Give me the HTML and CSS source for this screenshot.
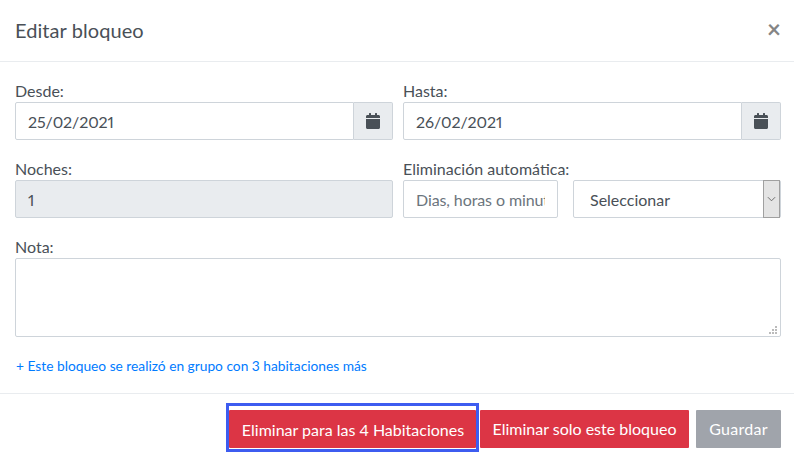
FILE: index.html
```html
<!DOCTYPE html>
<html lang="es">
<head>
<meta charset="utf-8">
<title>Editar bloqueo</title>
<link rel="stylesheet" href="styles.css">
</head>
<body>
<div class="modal">
  <header class="head">
    <h1 class="title">Editar bloqueo</h1>
    <span class="close">×</span>
  </header>
  <main class="body">
    <div class="row">
      <div class="field">
        <label class="label">Desde:</label>
        <div class="group">
          <input class="input joined" type="text" value="25/02/2021">
          <span class="addon"><svg class="cal" viewBox="0 0 448 512"><path d="M0 464c0 26.500 21.500 48 48 48h352c26.500 0 48-21.500 48-48V192H0v272zM400 64h-48V16c0-8.800-7.200-16-16-16h-32c-8.800 0-16 7.200-16 16v48H160V16c0-8.800-7.200-16-16-16h-32c-8.800 0-16 7.200-16 16v48H48C21.500 64 0 85.500 0 112v48h448v-48c0-26.500-21.500-48-48-48z"/></svg></span>
        </div>
      </div>
      <div class="field">
        <label class="label">Hasta:</label>
        <div class="group">
          <input class="input joined" type="text" value="26/02/2021">
          <span class="addon"><svg class="cal" viewBox="0 0 448 512"><path d="M0 464c0 26.500 21.500 48 48 48h352c26.500 0 48-21.500 48-48V192H0v272zM400 64h-48V16c0-8.800-7.200-16-16-16h-32c-8.800 0-16 7.200-16 16v48H160V16c0-8.800-7.200-16-16-16h-32c-8.800 0-16 7.200-16 16v48H48C21.500 64 0 85.500 0 112v48h448v-48c0-26.500-21.500-48-48-48z"/></svg></span>
        </div>
      </div>
    </div>
    <div class="row">
      <div class="field">
        <label class="label">Noches:</label>
        <input class="input" type="text" value="1" disabled>
      </div>
      <div class="field">
        <label class="label">Eliminación automática:</label>
        <div class="auto">
          <input class="input short" type="text" placeholder="Dias, horas o minutos">
          <div class="select">
            <span class="select-text">Seleccionar</span>
            <span class="spin"><svg class="chev" viewBox="0 0 10 6"><path d="M1 1l4 4 4-4"/></svg></span>
          </div>
        </div>
      </div>
    </div>
    <div class="note">
      <label class="label">Nota:</label>
      <div class="area-wrap">
        <textarea class="area"></textarea>
        <svg class="grip" viewBox="0 0 8 8"><path d="M6 0h2v2H6zM3 3h2v2H3zM6 3h2v2H6zM0 6h2v2H0zM3 6h2v2H3zM6 6h2v2H6z"/></svg>
      </div>
    </div>
    <a class="link" href="#">+ Este bloqueo se realizó en grupo con 3 habitaciones más</a>
  </main>
  <footer class="foot">
    <span class="focus"><button class="btn red wide">Eliminar para las 4 Habitaciones</button></span>
    <button class="btn red second">Eliminar solo este bloqueo</button>
    <button class="btn gray">Guardar</button>
  </footer>
</div>
</body>
</html>
```
FILE: styles.css
```css
* { box-sizing: border-box; }
html, body { margin: 0; background: #fff; }
body { font-family: Lato, sans-serif; font-size: 16px; color: #495057; }
.modal { width: 794px; height: 462px; overflow: hidden; }
.head { height: 62px; display: flex; align-items: center; justify-content: space-between; padding: 0 13px 2px 15px; border-bottom: 1px solid #e9ecef; }
.title { margin: 0; font-size: 20px; letter-spacing: .07px; font-weight: 400; line-height: 30px; color: #495057; }
.close { font-size: 24px; font-weight: 700; line-height: 24px; color: #858585; margin-top: -2px; }
.body { padding: 19px 13px 0 15px; }
.row { display: flex; gap: 10px; margin-bottom: 19px; }
.field { width: 378px; }
.label { display: block; height: 21px; font-size: 16px; line-height: 20px; color: #495057; }
.group { display: flex; }
.input { display: block; width: 100%; height: 38px; padding: 6px 12px; font: 16px/24px Lato, sans-serif; font-feature-settings: "pnum"; letter-spacing: -.1px; color: #495057; background: #fff; border: 1px solid #ced4da; border-radius: 2px; outline: 0; }
.input:disabled { background: #e9ecef; opacity: 1; }
.input::placeholder { color: #6c757d; opacity: 1; }
.joined { flex: 1; min-width: 0; border-radius: 2px 0 0 2px; }
.addon { width: 39px; height: 38px; display: flex; align-items: center; justify-content: center; background: #e9ecef; border: 1px solid #ced4da; border-left: 0; border-radius: 0 2px 2px 0; }
.cal { width: 14px; height: 16px; fill: #495057; }
.auto { display: flex; gap: 15px; }
.short { width: 155px; flex: none; }
.select { flex: 1; height: 38px; display: flex; align-items: stretch; justify-content: space-between; padding-left: 16px; background: #fff; border: 1px solid #ced4da; border-radius: 2px; }
.select-text { line-height: 38px; height: 36px; color: #495057; }
.spin { width: 17px; margin: -1px 0; display: flex; align-items: center; justify-content: center; background: #e4e4e4; border: 1px solid #a0a0a0; }
.chev { width: 9px; height: 6px; fill: none; stroke: #606060; stroke-width: 1; }
.note { margin-bottom: 20px; }
.area-wrap { position: relative; }
.area { display: block; width: 100%; height: 79px; padding: 6px 12px; background: #fff; border: 1px solid #ced4da; border-radius: 2px; outline: 0; resize: none; font: 16px/24px Lato, sans-serif; }
.grip { position: absolute; right: 4px; bottom: 3px; width: 8px; height: 8px; fill: #bbb; }
.link { display: block; font-size: 13.75px; line-height: 18px; color: #007bff; text-decoration: none; padding-left: 1px; }
.foot { margin-top: 18px; border-top: 1px solid #e9ecef; display: flex; justify-content: flex-end; align-items: flex-start; padding: 12px 13px 0 0; }
.btn { height: 38px; margin: 4px 0 0; padding: 0 12.5px; font: 16px/24px Lato, sans-serif; color: #fff; border: 0; border-radius: 1px; white-space: nowrap; }
.red { background: #dc3545; }
.gray { background: #a0a4ab; margin-left: 7px; width: 85px; padding: 0; letter-spacing: .25px; }
.second { margin-left: 4px; width: 209px; padding: 0; }
.focus { display: block; width: 247px; height: 43px; outline: 3px solid #3d5cf0; }
.wide { display: block; width: 246.500px; padding: 1px 0 0 1.500px; text-align: center; }
```
